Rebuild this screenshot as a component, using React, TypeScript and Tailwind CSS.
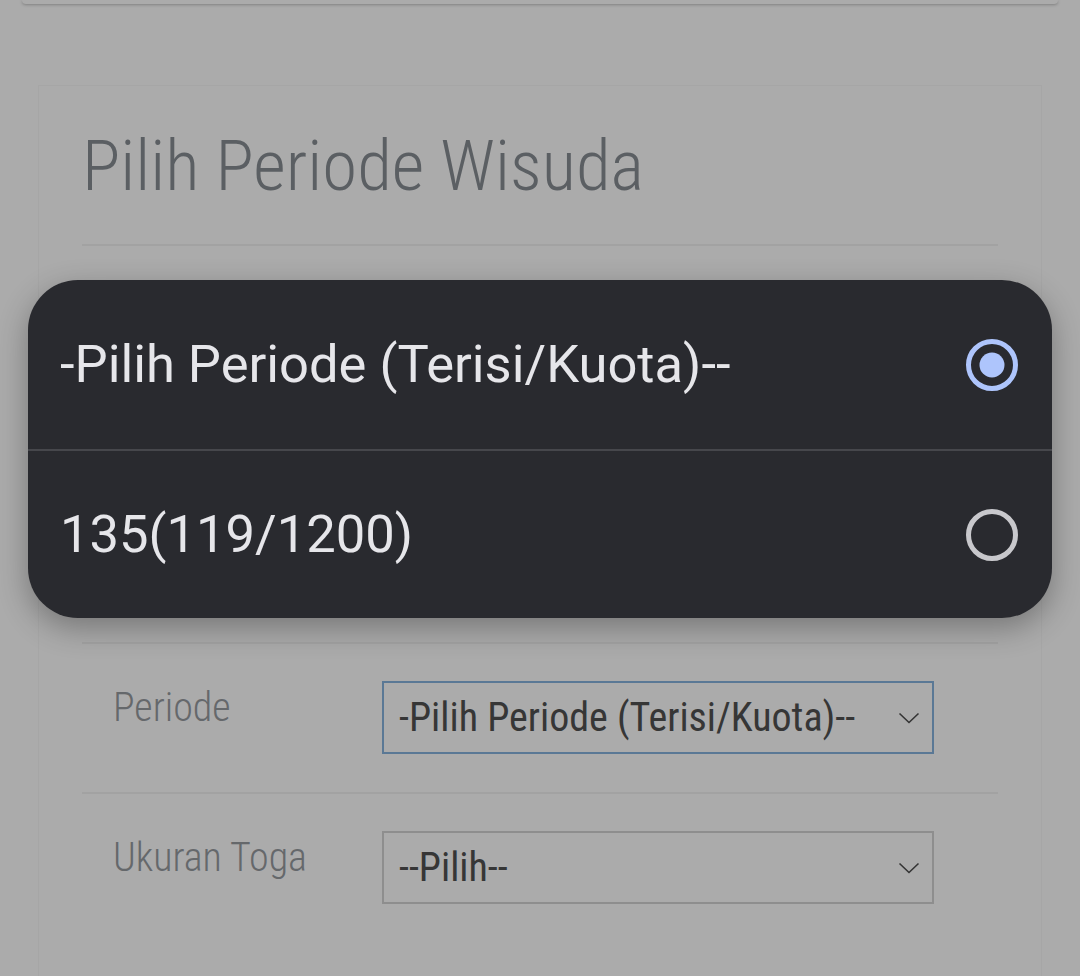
const condensed = "font-['Roboto_Condensed','Liberation_Sans_Narrow','DejaVu_Sans_Condensed',sans-serif] [font-stretch:condensed]";

function Chevron() {
  return (
    <svg width="22" height="12" viewBox="0 0 22 12" className="shrink-0">
      <path d="M1.5 1.5 L11 10.5 L20.5 1.5" fill="none" stroke="#343434" strokeWidth="1.6" />
    </svg>
  );
}

function FormRow({ label, value, focused }: { label: string; value: string; focused?: boolean }) {
  return (
    <div className="flex items-start pt-[37px] pb-[38px] border-t-2 border-[#a2a2a2]">
      <div className={`w-[300px] pl-[31px] pt-[7px] text-[40px] leading-none font-light text-[#65686b] ${condensed}`}>
        {label}
      </div>
      <div
        className={`w-[552px] h-[73px] flex items-center justify-between pl-[15px] pr-[12px] border-2 ${
          focused ? 'border-[#5a7895]' : 'border-[#8e8e8e]'
        }`}
      >
        <span className={`text-[40px] leading-none text-[#363636] ${condensed}`}>{value}</span>
        <Chevron />
      </div>
    </div>
  );
}

function Radio({ checked }: { checked?: boolean }) {
  return (
    <svg width="54" height="54" viewBox="0 0 54 54">
      <circle cx="27" cy="27" r="23.5" fill="none" stroke={checked ? '#aec5fc' : '#c8c8cc'} strokeWidth="5" />
      {checked && <circle cx="27" cy="27" r="12.5" fill="#aec5fc" />}
    </svg>
  );
}

export default function App() {
  const options = [
    { label: '-Pilih Periode (Terisi/Kuota)--', checked: true },
    { label: '135(119/1200)', checked: false },
  ];

  return (
    <div className="relative w-[1080px] h-[976px] overflow-hidden bg-[#ababab]">
      <div className="mx-[22px] h-[4px] rounded-b-md bg-[#ababab] shadow-[0_1px_3px_rgba(0,0,0,0.25)]" />

      <div className="ml-[38px] mt-[81px] w-[1004px] h-[1000px] border border-[#a6a6a6] px-[43px]">
        <h1 className={`pt-[44px] h-[158px] text-[71px] leading-none font-light text-[#5b5f63] ${condensed}`}>
          Pilih Periode Wisuda
        </h1>
        <div className="h-[398px] border-t-2 border-[#a2a2a2]" />
        <FormRow label="Periode" value="-Pilih Periode (Terisi/Kuota)--" focused />
        <FormRow label="Ukuran Toga" value="--Pilih--" />
      </div>

      {/* select popup */}
      <div className="absolute left-[28px] top-[280px] w-[1024px] rounded-[50px] bg-[#292a2f] shadow-[0_10px_30px_rgba(0,0,0,0.3)] overflow-hidden font-['Roboto',sans-serif]">
        {options.map((opt, i) => (
          <div
            key={opt.label}
            className={`h-[169px] flex items-center justify-between pl-[32px] pr-[33px] ${
              i > 0 ? 'border-t-2 border-[#46474c]' : ''
            }`}
          >
            <span className="text-[52.5px] leading-none text-[#e6e6ea]">{opt.label}</span>
            <Radio checked={opt.checked} />
          </div>
        ))}
      </div>
    </div>
  );
}
